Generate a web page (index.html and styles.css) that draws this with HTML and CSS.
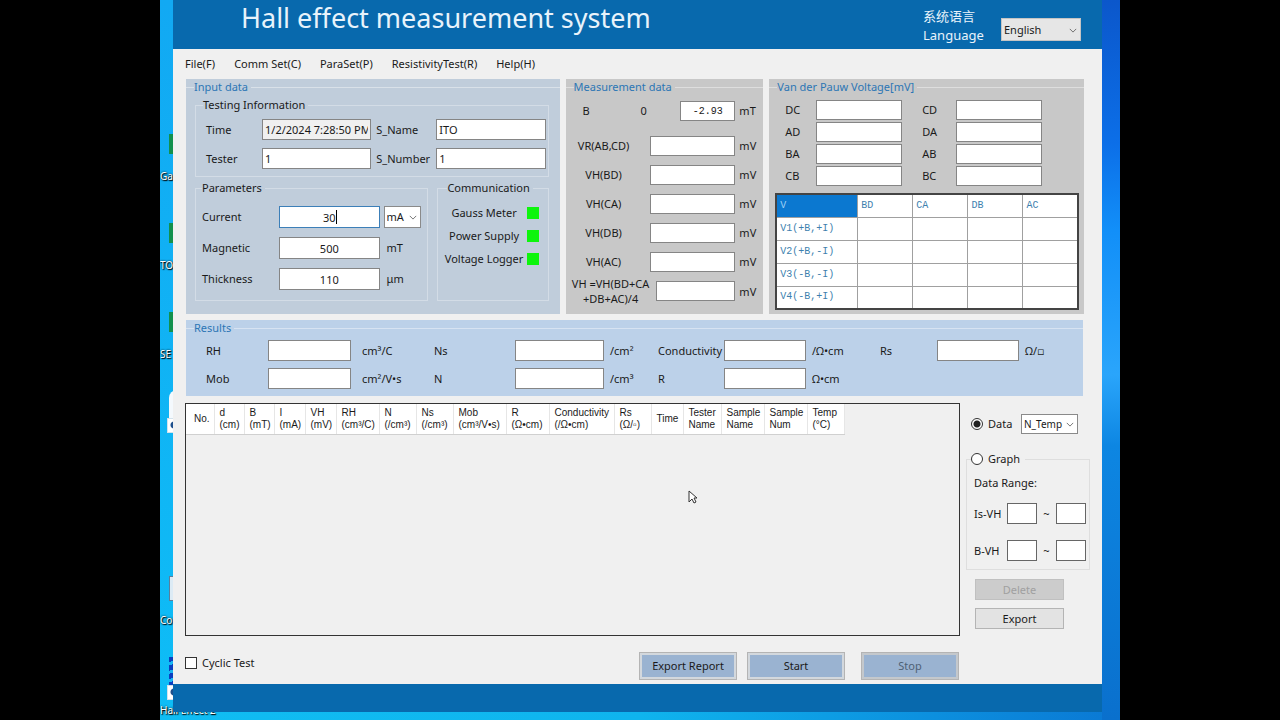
FILE: index.html
```
<!DOCTYPE html>
<html lang="en">
<head>
    <meta charset="UTF-8">
    <meta name="viewport" content="width=device-width, initial-scale=1.0">
    <title>Hall effect measurement system</title>
    <link rel="stylesheet" href="styles.css">
</head>
<body>

<div class="desktop">
    <!-- shortcuts partly hidden behind the window -->
    <div class="shortcut shortcut-gauss"><span class="file-icon"></span>Ga</div>
    <div class="shortcut shortcut-to"><span class="file-icon"></span>TO</div>
    <div class="shortcut shortcut-se"><span class="file-icon"></span>SE</div>
    <div class="shortcut shortcut-app"><span class="app-icon"></span></div>
    <div class="shortcut shortcut-com"><span class="doc-icon"></span>Con</div>
    <div class="shortcut shortcut-hall"><span class="coil-icon"></span>Hall Effect 2</div>

    <div class="window">
        <header class="title-bar">
            <h1>Hall effect measurement system</h1>
            <label class="language" for="language"><span lang="zh">系统语言</span><br>Language</label>
            <span class="select language-select">
                <select id="language"><option>English</option></select>
                <svg viewBox="0 0 10 6"><path d="M1 1l4 4 4-4"/></svg>
            </span>
        </header>

        <nav class="menu">
            <a href="#">File(F)</a>
            <a href="#">Comm Set(C)</a>
            <a href="#">ParaSet(P)</a>
            <a href="#">ResistivityTest(R)</a>
            <a href="#">Help(H)</a>
        </nav>

        <main>
            <div class="panels">
                <section class="panel input-panel">
                    <fieldset class="panel-box">
                        <legend>Input data</legend>
                        <fieldset class="group testing">
                            <legend>Testing Information</legend>
                            <label for="time">Time</label>
                            <input type="text" id="time" class="readonly" value="1/2/2024 7:28:50 PM" readonly>
                            <label for="s-name">S_Name</label>
                            <input type="text" id="s-name" value="ITO">
                            <label for="tester">Tester</label>
                            <input type="text" id="tester" value="1">
                            <label for="s-number">S_Number</label>
                            <input type="text" id="s-number" value="1">
                        </fieldset>
                        <div class="groups">
                            <fieldset class="group parameters">
                                <legend>Parameters</legend>
                                <label for="current">Current</label>
                                <span class="active-field">
                                    <input type="text" id="current" value="30">
                                    <span class="caret"></span>
                                </span>
                                <span class="select">
                                    <select id="current-unit" aria-label="Current unit"><option>mA</option></select>
                                    <svg viewBox="0 0 10 6"><path d="M1 1l4 4 4-4"/></svg>
                                </span>
                                <label for="magnetic">Magnetic</label>
                                <input type="text" id="magnetic" value="500">
                                <span class="unit">mT</span>
                                <label for="thickness">Thickness</label>
                                <input type="text" id="thickness" value="110">
                                <span class="unit">μm</span>
                            </fieldset>
                            <fieldset class="group communication">
                                <legend>Communication</legend>
                                <p>Gauss Meter</p><i class="led"></i>
                                <p>Power Supply</p><i class="led"></i>
                                <p>Voltage Logger</p><i class="led"></i>
                            </fieldset>
                        </div>
                    </fieldset>
                </section>

                <section class="panel grey-panel">
                    <fieldset class="panel-box">
                        <legend>Measurement data</legend>
                        <div class="field-row">
                            <label for="b">B</label>
                            <output class="zero">0</output>
                            <input type="text" id="b" class="mono" value="-2.93">
                            <span>mT</span>
                        </div>
                        <div class="measure-row">
                            <label for="vr">VR(AB,CD)</label>
                            <input type="text" id="vr">
                            <span>mV</span>
                        </div>
                        <div class="measure-row">
                            <label for="vh-bd">VH(BD)</label>
                            <input type="text" id="vh-bd">
                            <span>mV</span>
                        </div>
                        <div class="measure-row">
                            <label for="vh-ca">VH(CA)</label>
                            <input type="text" id="vh-ca">
                            <span>mV</span>
                        </div>
                        <div class="measure-row">
                            <label for="vh-db">VH(DB)</label>
                            <input type="text" id="vh-db">
                            <span>mV</span>
                        </div>
                        <div class="measure-row">
                            <label for="vh-ac">VH(AC)</label>
                            <input type="text" id="vh-ac">
                            <span>mV</span>
                        </div>
                        <div class="measure-row formula">
                            <label for="vh">VH =VH(BD+CA<br>+DB+AC)/4</label>
                            <input type="text" id="vh">
                            <span>mV</span>
                        </div>
                    </fieldset>
                </section>

                <section class="panel grey-panel">
                    <fieldset class="panel-box">
                        <legend>Van der Pauw Voltage[mV]</legend>
                        <div class="pauw">
                            <label for="dc">DC</label><input type="text" id="dc">
                            <label for="cd">CD</label><input type="text" id="cd">
                            <label for="ad">AD</label><input type="text" id="ad">
                            <label for="da">DA</label><input type="text" id="da">
                            <label for="ba">BA</label><input type="text" id="ba">
                            <label for="ab">AB</label><input type="text" id="ab">
                            <label for="cb">CB</label><input type="text" id="cb">
                            <label for="bc">BC</label><input type="text" id="bc">
                        </div>
                        <table class="voltages">
                            <tr><th class="selected">V</th><th>BD</th><th>CA</th><th>DB</th><th>AC</th></tr>
                            <tr><th>V1(+B,+I)</th><td></td><td></td><td></td><td></td></tr>
                            <tr><th>V2(+B,-I)</th><td></td><td></td><td></td><td></td></tr>
                            <tr><th>V3(-B,-I)</th><td></td><td></td><td></td><td></td></tr>
                            <tr><th>V4(-B,+I)</th><td></td><td></td><td></td><td></td></tr>
                        </table>
                    </fieldset>
                </section>
            </div>

            <section class="panel results-panel">
                <fieldset class="panel-box">
                    <legend>Results</legend>
                    <div class="results">
                        <label for="rh">RH</label><input type="text" id="rh"><span class="wide">cm³/C</span>
                        <label for="ns">Ns</label><input type="text" id="ns"><span>/cm²</span>
                        <label for="cond">Conductivity</label><input type="text" id="cond"><span>/Ω•cm</span>
                        <label for="rs">Rs</label><input type="text" id="rs"><span>Ω/▫</span>
                        <label for="mob">Mob</label><input type="text" id="mob"><span class="wide">cm²/V•s</span>
                        <label for="n">N</label><input type="text" id="n"><span>/cm³</span>
                        <label for="r">R</label><input type="text" id="r"><span>Ω•cm</span>
                    </div>
                </fieldset>
            </section>

            <div class="lower">
                <div class="data-view">
                    <table class="data-table">
                        <colgroup>
                            <col class="w27"><col class="w30"><col class="w30"><col class="w31"><col class="w31">
                            <col class="w43"><col class="w37"><col class="w37"><col class="w53"><col class="w43">
                            <col class="w65"><col class="w37"><col class="w32"><col class="w38"><col class="w43">
                            <col class="w43"><col class="w37">
                        </colgroup>
                        <thead>
                            <tr>
                                <th>No.</th>
                                <th>d<br>(cm)</th>
                                <th>B<br>(mT)</th>
                                <th>I<br>(mA)</th>
                                <th>VH<br>(mV)</th>
                                <th>RH<br>(cm³/C)</th>
                                <th>N<br>(/cm³)</th>
                                <th>Ns<br>(/cm³)</th>
                                <th>Mob<br>(cm³/V•s)</th>
                                <th>R<br>(Ω•cm)</th>
                                <th>Conductivity<br>(/Ω•cm)</th>
                                <th>Rs<br>(Ω/▫)</th>
                                <th>Time</th>
                                <th>Tester<br>Name</th>
                                <th>Sample<br>Name</th>
                                <th>Sample<br>Num</th>
                                <th>Temp<br>(°C)</th>
                            </tr>
                        </thead>
                    </table>
                    <svg class="cursor" viewBox="0 0 10 15"><path d="M1 1v11l3-3 2 4 2-1-2-4h3z"/></svg>
                </div>

                <aside class="side">
                    <div class="data-row">
                        <label><input type="radio" name="view" checked>Data</label>
                        <span class="select">
                            <select id="data-type" aria-label="Data type"><option>N_Temp</option></select>
                            <svg viewBox="0 0 10 6"><path d="M1 1l4 4 4-4"/></svg>
                        </span>
                    </div>
                    <fieldset class="graph">
                        <legend><label><input type="radio" name="view">Graph</label></legend>
                        <p>Data Range:</p>
                        <div class="range">
                            <label for="is-from">Is-VH</label>
                            <input type="text" id="is-from"><span>~</span><input type="text" aria-label="Is-VH to">
                        </div>
                        <div class="range">
                            <label for="b-from">B-VH</label>
                            <input type="text" id="b-from"><span>~</span><input type="text" aria-label="B-VH to">
                        </div>
                    </fieldset>
                    <button type="button" class="small-button" disabled>Delete</button>
                    <button type="button" class="small-button">Export</button>
                </aside>
            </div>

            <div class="actions">
                <label><input type="checkbox">Cyclic Test</label>
                <button type="button">Export Report</button>
                <button type="button">Start</button>
                <button type="button" class="stop" disabled>Stop</button>
            </div>
        </main>

        <footer></footer>
    </div>
</div>

</body>
</html>
```

FILE: styles.css
```
* {
    box-sizing: border-box;
}
body {
    margin: 0;
    background-color: #000;
    color: #1a1a1a;
    font-family: "Noto Sans", "DejaVu Sans", "Noto Sans CJK SC", sans-serif;
    font-size: 11px;
    line-height: 16px;
}
h1, p, fieldset, legend {
    margin: 0;
    padding: 0;
}
fieldset {
    border: 0;
    min-width: 0;
}
input, select, button {
    font: inherit;
    color: inherit;
    margin: 0;
}
input[type="text"] {
    width: 100%;
    min-width: 0;
    height: 20px;
    padding: 0 2px;
    border: 1px solid #858585;
    border-radius: 0;
    background: #fff;
}

/* desktop */
.desktop {
    position: relative;
    display: flex;
    width: 75%;
    min-height: 100vh;
    margin: 0 auto;
    padding: 0 18px 8px 13px;
    overflow: hidden;
    background:
        linear-gradient(to bottom, #0b57cb 0%, #0c6fe8 20%, #128ff8 32%, #2aa5fb 52%, #0d86e2 62%, #0a70cd 100%) right / 18px 100% no-repeat,
        linear-gradient(to right, #10bdf3 0%, #0fb4ee 50%, #0a78d4 100%) bottom / 100% 8px no-repeat,
        linear-gradient(to bottom, #12a9f3, #0ebdf6);
}
.shortcut {
    position: absolute;
    left: 0;
    color: #fff;
    font-size: 10px;
    line-height: 14px;
    text-shadow: 0 0 2px #000, 1px 1px 1px #000;
    white-space: nowrap;
}
.shortcut span {
    display: block;
    width: 20px;
    margin-left: 9px;
}
.shortcut-gauss { top: 134px; }
.shortcut-to { top: 223px; }
.shortcut-se { top: 312px; }
.shortcut-app { top: 390px; }
.shortcut-com { top: 576px; }
.shortcut-hall { top: 657px; }
.file-icon {
    height: 20px;
    margin-bottom: 15px;
    background: #12904c;
}
.app-icon {
    height: 42px;
    border-radius: 8px 0 0 0;
    background: #f4f9fd;
}
.doc-icon {
    height: 25px;
    margin-bottom: 12px;
    border: 1px solid #5b7f9b;
    background: #dcebf5;
}
.coil-icon {
    height: 40px;
    margin-bottom: 6px;
    background: repeating-linear-gradient(160deg, #0a3fc0 0 5px, #18b5f2 5px 8px);
}
/* shortcut arrow badge */
.app-icon::after,
.coil-icon::after {
    content: "";
    position: absolute;
    left: 7px;
    top: 28px;
    width: 14px;
    height: 13px;
    border: 1px solid #d3e2ec;
    background: radial-gradient(circle at 6px 6px, #1d4f8c 0 3px, #fff 4px);
}

/* window */
.window {
    position: relative;
    flex: 1;
    display: flex;
    flex-direction: column;
    min-width: 0;
    background: #f0f0f0;
}
.title-bar {
    display: flex;
    align-items: flex-start;
    height: 49px;
    padding: 0 21px 0 68px;
    background: #0869ad;
    color: #e8f3fb;
}
.title-bar h1 {
    flex: 1;
    font-size: 27px;
    font-weight: 400;
    line-height: 36px;
}
.language {
    width: 78px;
    padding-top: 7px;
    font-size: 13px;
    line-height: 19px;
}
.select {
    position: relative;
    display: block;
}
.select select {
    display: block;
    width: 100%;
    height: 22px;
    padding: 0 0 0 2px;
    border: 1px solid #8a8a8a;
    border-radius: 0;
    background: #fff;
    color: #1a1a1a;
    appearance: none;
}
.select svg {
    position: absolute;
    right: 4px;
    top: 50%;
    width: 8px;
    height: 5px;
    margin-top: -2px;
    fill: none;
    stroke: #555;
    pointer-events: none;
}
.language-select {
    width: 80px;
    margin-top: 18px;
}
.language-select select {
    height: 23px;
    background: #e6e6e6;
    border-color: #c4c4c4;
}
.menu {
    display: flex;
    gap: 19px;
    padding: 7px 12px;
}
.menu a {
    color: #1a1a1a;
    text-decoration: none;
}
main {
    flex: 1;
    display: flex;
    flex-direction: column;
    padding: 0 12px 4px;
}
footer {
    height: 28px;
    background: #0869ad;
}

/* panels */
.panels {
    display: grid;
    grid-template-columns: 374fr 198fr 315fr;
    gap: 6px;
    margin: 0 6px 6px 1px;
}
.panel-box {
    border-top: 1px solid rgba(255, 255, 255, 0.4);
}
.panel-box > legend {
    margin-left: 8px;
    padding-right: 3px;
    color: #2c76b5;
}
.input-panel {
    padding-bottom: 13px;
    background: #c0cddb;
}
.grey-panel {
    background: #c8c8c8;
}
.results-panel {
    margin: 0 7px 7px 1px;
    padding-bottom: 7px;
    background: #bcd1e9;
}
.group {
    border: 1px solid rgba(255, 255, 255, 0.3);
}
.group > legend {
    padding-right: 3px;
}
.testing {
    display: grid;
    grid-template-columns: 56px 1fr 65px 1fr;
    row-gap: 8px;
    align-items: center;
    margin: 2px 11px 0 9px;
    padding: 6px 2px 7px 10px;
}
.testing legend {
    margin-left: -3px;
}
.testing input[type="text"] {
    height: 21px;
}
.testing .readonly {
    background: #f0f0f0;
}
.testing label:nth-of-type(even) {
    padding-left: 5px;
}
.groups {
    display: grid;
    grid-template-columns: 1fr 112px;
    gap: 9px;
    margin: 3px 11px 0 9px;
}
.parameters {
    display: grid;
    grid-template-columns: 73px 1fr 37px;
    gap: 9px 4px;
    align-items: center;
    padding: 10px 6px;
}
.parameters input[type="text"] {
    height: 22px;
    text-align: center;
}
.parameters .unit {
    padding-left: 3px;
}
.active-field {
    position: relative;
}
.active-field input[type="text"] {
    display: block;
    border-color: #3c7fb8;
}
.caret {
    position: absolute;
    left: 50%;
    top: 4px;
    width: 1px;
    height: 14px;
    margin-left: 7px;
    background: #000;
}
.communication {
    display: grid;
    grid-template-columns: 1fr 12px;
    grid-auto-rows: 23px;
    align-items: center;
    padding: 5px 9px 0 4px;
    text-align: center;
    white-space: nowrap;
}
.led {
    height: 12px;
    background: #0df50d;
}

/* measurement data */
.field-row {
    display: flex;
    align-items: center;
    height: 32px;
    margin-bottom: 4px;
    padding-left: 17px;
}
.field-row label {
    width: 58px;
}
.zero {
    flex: 1;
}
.field-row input[type="text"] {
    width: 55px;
    text-align: center;
}
.field-row span,
.measure-row span {
    width: 28px;
    padding-left: 4px;
    text-align: left;
}
.measure-row {
    display: grid;
    grid-template-columns: 84px 1fr 28px;
    align-items: center;
    height: 29px;
    text-align: center;
}
.measure-row label {
    padding-right: 8px;
}
.formula {
    grid-template-columns: 90px 1fr 28px;
    height: 30px;
    line-height: 15px;
}
.formula label {
    padding-right: 0;
}
.mono {
    font-family: "Liberation Mono", monospace;
    font-size: 10px;
}

/* van der pauw */
.pauw {
    display: grid;
    grid-template-columns: 31px 1fr 54px 1fr;
    row-gap: 2px;
    align-items: center;
    padding: 5px 42px 7px 16px;
}
.pauw label:nth-of-type(even) {
    padding-left: 20px;
}
.voltages {
    width: calc(100% - 11px);
    margin: 0 5px 4px 6px;
    border: 2px solid #444;
    border-collapse: collapse;
    table-layout: fixed;
    background: #fff;
}
.voltages th,
.voltages td {
    height: 23px;
    padding: 0 3px;
    border: 1px solid #a0a0a0;
    color: #3d7fae;
    font-family: "Liberation Mono", monospace;
    font-size: 10px;
    font-weight: 400;
    text-align: left;
}
.voltages th:first-child {
    width: 27%;
}
.voltages .selected {
    background: #0b78d0;
    color: #9fd0f5;
}

/* results */
.results {
    display: grid;
    grid-template-columns: 62px 83fr 83px 81px 89fr 54px 66px 82fr 74px 57px 82fr 64px;
    row-gap: 7px;
    align-items: center;
    padding: 4px 0 0 20px;
}
.results input[type="text"] {
    height: 21px;
}
.results span {
    padding-left: 6px;
}
.results .wide {
    padding-left: 11px;
}

/* data table */
.lower {
    flex: 1;
    display: grid;
    grid-template-columns: 1fr 124px;
    gap: 6px;
}
.data-view {
    position: relative;
    min-height: 160px;
    border: 1px solid #333;
}
.data-table {
    width: 658px;
    border-collapse: collapse;
    table-layout: fixed;
    background: #fff;
}
.data-table th {
    height: 30px;
    padding: 0 0 0 5px;
    border-right: 1px solid #e6e6e6;
    border-bottom: 1px solid #d0d0d0;
    font-family: "Liberation Sans", sans-serif;
    font-size: 10px;
    font-weight: 400;
    line-height: 12px;
    text-align: left;
    white-space: nowrap;
}
.data-table th:first-child {
    padding-left: 8px;
}
.w27 { width: 28px; }
.w30 { width: 30px; }
.w31 { width: 31px; }
.w32 { width: 32px; }
.w37 { width: 37px; }
.w38 { width: 38px; }
.w43 { width: 43px; }
.w53 { width: 53px; }
.w65 { width: 65px; }
.cursor {
    position: absolute;
    left: 65%;
    top: 86px;
    width: 10px;
    height: 15px;
    fill: #fff;
    stroke: #333;
}

/* side */
input[type="radio"] {
    width: 12px;
    height: 12px;
    border: 1px solid #333;
    border-radius: 50%;
    background: #fff;
    appearance: none;
}
input[type="radio"]:checked {
    background: radial-gradient(#222 0 3px, #fff 4px);
}
.side label {
    display: flex;
    align-items: center;
    gap: 5px;
}
.data-row {
    display: flex;
    justify-content: space-between;
    align-items: center;
    height: 20px;
    margin: 11px 12px 0 5px;
}
.data-row .select {
    width: 57px;
}
.data-row select {
    height: 20px;
    font-size: 10px;
}
.graph {
    margin: 17px 0 9px;
    padding: 8px 3px 8px 7px;
    border: 1px solid #dedede;
}
.graph legend {
    margin-left: -3px;
    padding-right: 5px;
}
.range {
    display: grid;
    grid-template-columns: 33px 1fr 19px 1fr;
    align-items: center;
    height: 21px;
    margin-top: 12px;
    text-align: center;
}
.range + .range {
    margin-top: 16px;
}
.range input[type="text"] {
    height: 21px;
    border-color: #666;
}
.small-button {
    display: block;
    width: 89px;
    height: 21px;
    margin: 0 0 8px 9px;
    padding: 0;
    border: 1px solid #b4b4b4;
    background: #e3e3e3;
}
.small-button:last-child {
    margin-bottom: 0;
}
.small-button:disabled {
    border-color: #c0c0c0;
    background: #cccccc;
    color: #a0a0a0;
}

/* actions */
.actions {
    display: flex;
    align-items: center;
    gap: 10px;
    height: 29px;
    margin-top: 15px;
    padding-right: 131px;
}
.actions label {
    display: flex;
    flex: 1;
    gap: 5px;
    align-items: center;
    margin-bottom: 5px;
}
.actions input {
    width: 12px;
    height: 12px;
    border: 1px solid #333;
    background: #fff;
    appearance: none;
}
.actions button {
    width: 98px;
    height: 28px;
    padding: 0;
    border: 1px solid #b4b4b4;
    background: #9ab3d1;
    box-shadow: inset 0 0 0 2px #d3d8dd;
}
.actions .stop {
    margin-left: 6px;
    color: #4f6175;
    box-shadow: inset 0 0 0 2px #c4c8cc;
}
```
